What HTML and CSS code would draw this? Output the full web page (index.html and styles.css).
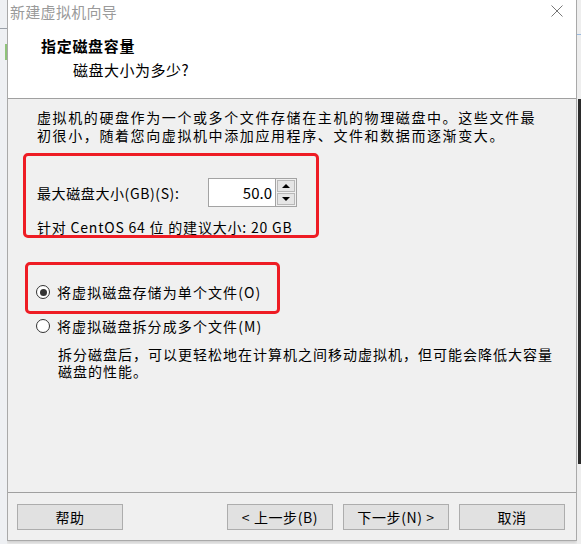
FILE: index.html
```html
<!DOCTYPE html>
<html lang="zh-CN">
<head>
<meta charset="utf-8">
<title>新建虚拟机向导</title>
<link rel="stylesheet" href="styles.css">
</head>
<body>
<div class="screen">
  <div class="bg-left"><div class="bg-line"></div><div class="bg-green"></div></div>
  <div class="window">
    <div class="top">
      <div class="titlebar">
        <span class="title">新建虚拟机向导</span>
        <svg class="close" width="12" height="12" viewBox="0 0 12 12"><path d="M0.5 0.5 L11.5 11.5 M11.5 0.5 L0.5 11.5" stroke="#777" stroke-width="1" fill="none"/></svg>
      </div>
      <div class="head-title">指定磁盘容量</div>
      <div class="head-sub">磁盘大小为多少?</div>
    </div>
    <div class="content">
      <p class="intro">虚拟机的硬盘作为一个或多个文件存储在主机的物理磁盘中。这些文件最<br>初很小，随着您向虚拟机中添加应用程序、文件和数据而逐渐变大。</p>
      <div class="size-row">
        <span class="size-label">最大磁盘大小(GB)(S):</span>
        <div class="spin">
          <div class="spin-input">50.0</div>
          <div class="spin-btns">
            <div class="spin-btn"><span class="tri-up"></span></div>
            <div class="spin-btn"><span class="tri-down"></span></div>
          </div>
        </div>
      </div>
      <div class="recommend">针对 CentOS 64 位 的建议大小: 20 GB</div>
      <div class="radio-row first">
        <span class="radio checked"></span>
        <span>将虚拟磁盘存储为单个文件(O)</span>
      </div>
      <div class="radio-row second">
        <span class="radio"></span>
        <span>将虚拟磁盘拆分成多个文件(M)</span>
      </div>
      <p class="desc">拆分磁盘后，可以更轻松地在计算机之间移动虚拟机，但可能会降低大容量<br>磁盘的性能。</p>
      <div class="mark mark-size"></div>
      <div class="mark mark-radio"></div>
    </div>
    <div class="footer">
      <button class="btn">帮助</button>
      <button class="btn push">&lt; 上一步(B)</button>
      <button class="btn">下一步(N) &gt;</button>
      <button class="btn">取消</button>
    </div>
  </div>
  <div class="bg-right"><div class="bg-blue"></div><div class="bg-dark"></div></div>
</div>
</body>
</html>
```

FILE: styles.css
```css
* { box-sizing: border-box; }
html, body { margin: 0; padding: 0; }
body {
  width: 581px;
  height: 544px;
  overflow: hidden;
  background: #f2f2f2;
  font-family: "Noto Sans CJK SC", "Noto Sans", sans-serif;
  color: #000;
}
.screen {
  display: flex;
  align-items: flex-start;
  height: 544px;
}
.bg-left {
  width: 7px;
  height: 544px;
  background: #eef0f3;
  position: relative;
}
.bg-line { position: absolute; left: 0; top: 28px; width: 7px; height: 1px; background: #9aa0a8; }
.bg-green { position: absolute; left: 5px; top: 44px; width: 2px; height: 16px; background: #8fc37a; }
.bg-right {
  width: 4px;
  height: 544px;
  background: #eeeeee;
  position: relative;
}
.bg-blue { position: absolute; left: 0; top: 34px; width: 4px; height: 1px; background: #9bbbe0; }
.bg-dark { position: absolute; left: 1px; top: 99px; width: 3px; height: 365px; background: #2b2b2b; }

.window {
  width: 570px;
  height: 541px;
  border-left: 1px solid #a9a9a9;
  border-right: 1px solid #a9a9a9;
  border-bottom: 1px solid #a9a9a9;
  display: flex;
  flex-direction: column;
  box-shadow: 0 2px 3px rgba(0,0,0,0.15);
}
.top {
  background: #fff;
  height: 99px;
  border-bottom: 1px solid #a0a0a0;
  flex: none;
}
.titlebar {
  height: 24px;
  display: flex;
  align-items: center;
  justify-content: space-between;
  padding-left: 2px;
  padding-right: 13px;
}
.title {
  font-size: 15px;
  color: #9a9a9a;
  line-height: 24px;
  letter-spacing: 0.3px;
}
.close { margin-top: -2px; }
.head-title {
  margin-top: 12px;
  padding-left: 33px;
  font-size: 15px;
  font-weight: bold;
  line-height: 20px;
  letter-spacing: 0.7px;
}
.head-sub {
  margin-top: 4px;
  padding-left: 65px;
  font-size: 15px;
  line-height: 20px;
  letter-spacing: 0.5px;
}
.content {
  flex: 1;
  background: #f0f0f0;
  position: relative;
  font-size: 14px;
  letter-spacing: 1.3px;
}
.intro {
  margin: 10px 0 0 29px;
  line-height: 18px;
  letter-spacing: 1.6px;
  font-family: "Liberation Sans", "Noto Sans CJK SC", sans-serif;
}
.size-row {
  margin: 33px 0 0 29px;
  height: 29px;
  display: flex;
  align-items: center;
}
.size-label {
  width: 171px;
  letter-spacing: 0.6px;
}
.spin { display: flex; height: 29px; }
.spin-input {
  width: 68px;
  height: 29px;
  background: #fff;
  border: 1px solid #a3a3a3;
  text-align: right;
  padding-right: 3px;
  line-height: 27px;
  font-size: 15px;
  letter-spacing: 0;
}
.spin-btns {
  width: 21px;
  display: flex;
  flex-direction: column;
  border: 1px solid #a3a3a3;
  border-left: none;
  padding: 1px;
  gap: 1px;
  background: #f0f0f0;
}
.spin-btn {
  flex: 1;
  background: #e5e5e5;
  border: 1px solid #b8b8b8;
  display: flex;
  align-items: center;
  justify-content: center;
}
.tri-up { width: 0; height: 0; border-left: 4px solid transparent; border-right: 4px solid transparent; border-bottom: 4px solid #000; }
.tri-down { width: 0; height: 0; border-left: 4px solid transparent; border-right: 4px solid transparent; border-top: 4px solid #000; }
.recommend {
  margin: 11px 0 0 29px;
  line-height: 18px;
  letter-spacing: 0.8px;
}
.radio-row {
  display: flex;
  align-items: center;
  height: 20px;
  padding-left: 28px;
  gap: 7px;
  letter-spacing: 1.1px;
}
.radio-row.first { margin-top: 46px; }
.radio-row.second { margin-top: 14px; }
.radio {
  width: 14px;
  height: 14px;
  border-radius: 50%;
  border: 1px solid #333;
  background: #fff;
  position: relative;
  flex: none;
}
.radio.checked::after {
  content: "";
  position: absolute;
  left: 2.5px;
  top: 2.5px;
  width: 7px;
  height: 7px;
  border-radius: 50%;
  background: #333;
}
.desc {
  margin: 11px 0 0 50px;
  line-height: 17px;
  letter-spacing: 1px;
  font-family: "Liberation Sans", "Noto Sans CJK SC", sans-serif;
}
.mark {
  position: absolute;
  border: 3px solid #ee1c24;
  border-radius: 5px;
}
.mark-size { left: 15px; top: 54px; width: 296px; height: 85px; }
.mark-radio { left: 17px; top: 163px; width: 255px; height: 52px; }
.footer {
  flex: none;
  height: 48px;
  border-top: 1px solid #a0a0a0;
  background: #f0f0f0;
  display: flex;
  align-items: flex-start;
  padding: 11px 11px 0 9px;
  gap: 10px;
}
.btn {
  width: 106px;
  height: 26px;
  background: #e1e1e1;
  border: 1px solid #adadad;
  font-family: "Noto Sans CJK SC", "Noto Sans", sans-serif;
  font-size: 14px;
  color: #000;
  padding: 0;
  letter-spacing: 0.6px;
}
.btn.push { margin-left: auto; }
```
